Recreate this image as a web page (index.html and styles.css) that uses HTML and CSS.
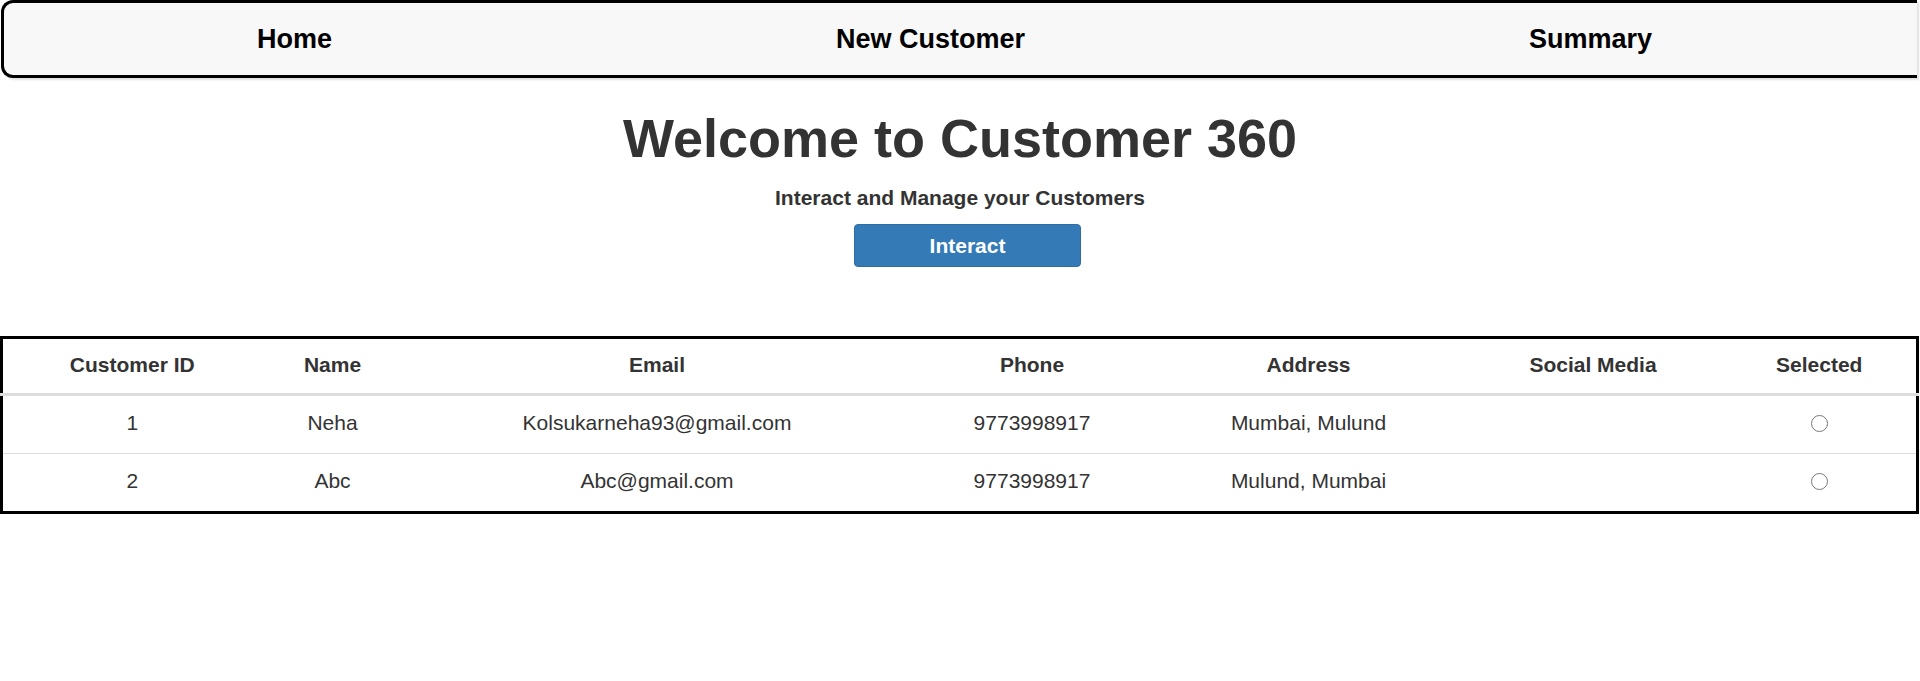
FILE: index.html
```html
<!DOCTYPE html>
<html lang="en">
<head>
<meta charset="utf-8">
<title>Customer 360</title>
<link rel="stylesheet" href="styles.css">
</head>
<body>
<nav class="topnav">
  <ul class="nav-list">
    <li class="nav-item">Home</li>
    <li class="nav-item">New Customer</li>
    <li class="nav-item">Summary</li>
  </ul>
</nav>
<section class="hero">
  <h1 class="hero-title">Welcome to Customer 360</h1>
  <p class="hero-sub">Interact and Manage your Customers</p>
  <button class="btn-primary" type="button">Interact</button>
</section>
<table class="cust-table">
  <colgroup>
    <col class="c-id"><col class="c-name"><col class="c-email"><col class="c-phone"><col class="c-addr"><col class="c-social"><col class="c-sel">
  </colgroup>
  <thead>
    <tr>
      <th>Customer ID</th><th>Name</th><th>Email</th><th>Phone</th><th>Address</th><th>Social Media</th><th>Selected</th>
    </tr>
  </thead>
  <tbody>
    <tr>
      <td>1</td><td>Neha</td><td>Kolsukarneha93@gmail.com</td><td>9773998917</td><td>Mumbai, Mulund</td><td></td><td><input class="radio" type="radio" name="sel"></td>
    </tr>
    <tr>
      <td>2</td><td>Abc</td><td>Abc@gmail.com</td><td>9773998917</td><td>Mulund, Mumbai</td><td></td><td><input class="radio" type="radio" name="sel"></td>
    </tr>
  </tbody>
</table>
</body>
</html>
```
FILE: styles.css
```css
html, body {
  margin: 0;
  padding: 0;
  background: #fff;
  overflow-x: hidden;
}
body {
  font-family: "Liberation Sans", Arial, sans-serif;
  color: #333;
}
.topnav {
  margin: 0 3px 0 1px;
  height: 78px;
  box-sizing: border-box;
  background: #f8f8f8;
  border: 3px solid #000;
  border-right: none;
  border-radius: 12px 0 0 12px;
  box-shadow: 2px 2px 2px rgba(0, 0, 0, 0.12);
  padding: 0 13px 0 1px;
  display: flex;
  align-items: center;
}
.nav-list {
  list-style: none;
  margin: 0;
  padding: 0;
  flex: 1;
  display: flex;
  justify-content: space-around;
  align-items: center;
}
.nav-item {
  font-size: 27px;
  font-weight: bold;
  color: #000;
  line-height: 32px;
}
.hero {
  text-align: center;
  padding-top: 30px;
}
.hero-title {
  margin: 0;
  font-size: 54px;
  line-height: 60px;
  font-weight: bold;
  color: #333;
}
.hero-sub {
  margin: 18px 0 0;
  font-size: 21px;
  line-height: 24px;
  font-weight: bold;
  color: #333;
}
.btn-primary {
  margin: 14px 0 0 15px;
  width: 227px;
  height: 43px;
  background: #337ab7;
  border: 1px solid #2e6da4;
  border-radius: 4px;
  color: #fff;
  font-family: "Liberation Sans", Arial, sans-serif;
  font-size: 21px;
  font-weight: bold;
  padding: 0;
}
.cust-table {
  margin-top: 69px;
  width: calc(100% - 1px);
  table-layout: fixed;
  border-collapse: collapse;
  border: 3px solid #000;
  font-size: 21px;
  color: #333;
}
.c-id { width: 260px; }
.c-name { width: 142px; }
.c-email { width: 507px; }
.c-phone { width: 243px; }
.c-addr { width: 310px; }
.c-social { width: 259px; }
.cust-table th {
  height: 52px;
  padding: 0 0 2px;
  font-weight: bold;
  text-align: center;
  vertical-align: middle;
  border-bottom: 3px solid #ddd;
}
.cust-table td {
  height: 53px;
  padding: 0 0 4px;
  text-align: center;
  vertical-align: middle;
}
.cust-table tbody tr + tr td {
  border-top: 1px solid #ddd;
}
.radio {
  appearance: none;
  -webkit-appearance: none;
  width: 17px;
  height: 17px;
  margin: 0;
  border: 1.5px solid #767676;
  border-radius: 50%;
  background: #fff;
  vertical-align: middle;
}
```
